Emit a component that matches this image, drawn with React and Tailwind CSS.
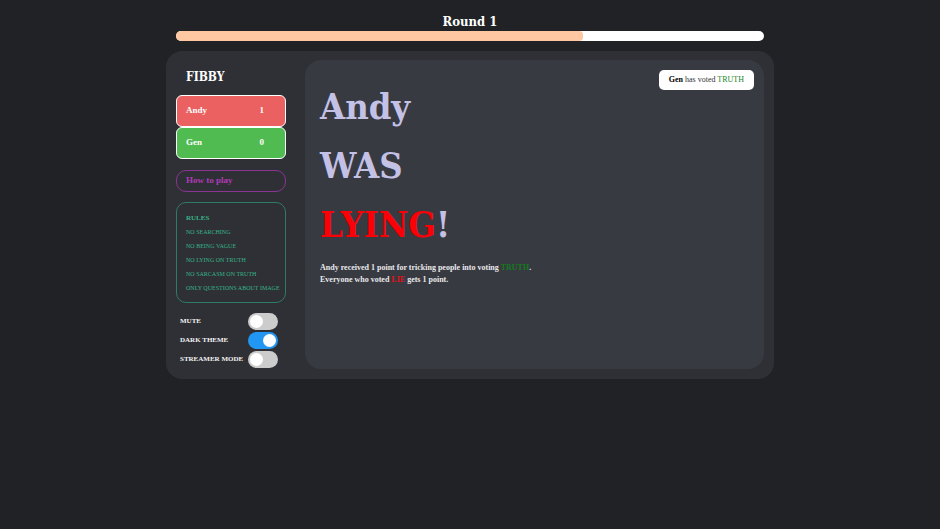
import React, { useState } from "react";

const players = [
  { name: "Andy", score: 1, color: "bg-[#eb6161]" },
  { name: "Gen", score: 0, color: "bg-[#4fbb50]" },
];

const rules = [
  "NO SEARCHING",
  "NO BEING VAGUE",
  "NO LYING ON TRUTH",
  "NO SARCASM ON TRUTH",
  "ONLY QUESTIONS ABOUT IMAGE",
];

const App = () => {
  const [settings, setSettings] = useState({
    mute: false,
    dark: true,
    streamer: false,
  });
  const timeLeft = 69.3;

  const toggle = (key) => setSettings({ ...settings, [key]: !settings[key] });

  return (
    <div className="min-h-screen bg-[#212225] px-4 pt-3 font-bold text-white font-['Liberation_Serif',serif]">
      <div className="mx-auto w-full max-w-[608px]">
        {/* Round timer */}
        <header className="px-[10px]">
          <h1 className="text-center text-[13px] leading-[19px] font-['DejaVu_Serif_Condensed','DejaVu_Serif',serif]">
            Round 1
          </h1>
          <div className="h-[10px] overflow-hidden rounded-full bg-white">
            <div
              className="h-full rounded-r-sm bg-[#ffc8a2]"
              style={{ width: `${timeLeft}%` }}
            />
          </div>
        </header>

        <div className="mt-[10px] flex gap-[19px] rounded-2xl bg-[#2f3035] p-[10px] pt-[9px]">
          {/* Sidebar */}
          <aside className="flex w-[110px] shrink-0 flex-col">
            <h2 className="px-[10px] pt-[7px] text-[12px] leading-[20px] font-['DejaVu_Serif_Condensed','DejaVu_Serif',serif]">
              FIBBY
            </h2>

            <ul className="mt-[8px]">
              {players.map((p) => (
                <PlayerCard key={p.name} {...p} />
              ))}
            </ul>

            <button className="mt-[11px] h-[22px] rounded-[10px] border border-[#8b3493] px-[9px] text-left text-[9px] text-[#b03ab5]">
              How to play
            </button>

            <section className="mt-[10px] rounded-[10px] border border-[#2f7a68] px-[9px] pt-[8px] pb-[7px] text-[#35b487]">
              <h3 className="text-[7px] leading-[14px]">RULES</h3>
              <ul className="whitespace-nowrap text-[6px] font-normal leading-[14px]">
                {rules.map((rule) => (
                  <li key={rule}>{rule}</li>
                ))}
              </ul>
            </section>

            <div className="mt-[9px] pr-[8px] pl-[4px]">
              <Switch label="MUTE" checked={settings.mute} onChange={() => toggle("mute")} />
              <Switch label="DARK THEME" checked={settings.dark} onChange={() => toggle("dark")} />
              <Switch
                label="STREAMER MODE"
                checked={settings.streamer}
                onChange={() => toggle("streamer")}
              />
            </div>
          </aside>

          {/* Result */}
          <main className="relative min-w-0 flex-1 rounded-2xl bg-[#383a42] px-[15px] pt-[17px]">
            <div className="text-[36px] leading-[59px] text-[#c4c1e6] font-['DejaVu_Serif_Condensed','DejaVu_Serif',serif]">
              <p>Andy</p>
              <p>WAS</p>
              <p>
                <span className="text-[#fb0007]">LYING</span>!
              </p>
            </div>
            <div className="mt-[8px] text-[8px] leading-[12px] text-[#e8e8ea]">
              <p>
                Andy received 1 point for tricking people into voting{" "}
                <span className="text-[#117c1b]">TRUTH</span>.
              </p>
              <p>
                Everyone who voted <span className="text-[#e0121c]">LIE</span> gets 1 point.
              </p>
            </div>

            <div className="absolute top-[10px] right-[10px] flex h-5 items-center rounded-[5px] bg-white px-[10px] text-[8px] font-normal text-[#333333]">
              <p>
                <b className="text-black">Gen</b> has voted{" "}
                <span className="text-[#1c861f]">TRUTH</span>
              </p>
            </div>
          </main>
        </div>
      </div>
    </div>
  );
};

const PlayerCard = ({ name, score, color }) => (
  <li
    className={`flex h-[32px] items-center justify-between rounded-[6px] border border-white pr-[21px] pl-[9px] text-[9px] ${color}`}
  >
    <span>{name}</span>
    <span>{score}</span>
  </li>
);

const Switch = ({ label, checked, onChange }) => (
  <label className="flex h-[19px] items-center justify-between whitespace-nowrap text-[7px] text-[#f2f2f2]">
    {label}
    <input
      type="checkbox"
      checked={checked}
      onChange={onChange}
      className="h-[17px] w-[30px] shrink-0 appearance-none rounded-full bg-[#cccccc] p-[2px] before:block before:size-[13px] before:rounded-full before:bg-white checked:bg-[#2196f3] checked:before:ml-[13px]"
    />
  </label>
);

export default App;
